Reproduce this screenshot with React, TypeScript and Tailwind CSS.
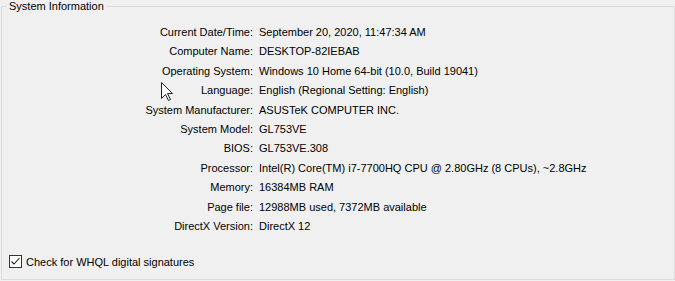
const rows: [string, string][] = [
  ["Current Date/Time:", "September 20, 2020, 11:47:34 AM"],
  ["Computer Name:", "DESKTOP-82IEBAB"],
  ["Operating System:", "Windows 10 Home 64-bit (10.0, Build 19041)"],
  ["Language:", "English (Regional Setting: English)"],
  ["System Manufacturer:", "ASUSTeK COMPUTER INC."],
  ["System Model:", "GL753VE"],
  ["BIOS:", "GL753VE.308"],
  ["Processor:", "Intel(R) Core(TM) i7-7700HQ CPU @ 2.80GHz (8 CPUs), ~2.8GHz"],
  ["Memory:", "16384MB RAM"],
  ["Page file:", "12988MB used, 7372MB available"],
  ["DirectX Version:", "DirectX 12"],
];

function Cursor() {
  return (
    <svg
      className="absolute left-[161px] top-[82px] pointer-events-none"
      width="13"
      height="20"
      viewBox="0 0 13 20"
    >
      <path
        d="M0.5 0.5 L0.5 16.5 L4.5 12.5 L7.5 18.5 L9.5 17.5 L6.5 11.5 L11.5 11.5 Z"
        fill="#fff"
        stroke="#222"
        strokeWidth="1"
        strokeLinejoin="miter"
      />
    </svg>
  );
}

export default function App() {
  return (
    <div
      className="relative w-[675px] h-[281px] bg-[#f0f0f0] text-black text-[11px] overflow-hidden"
      style={{ fontFamily: '"Liberation Sans", Arial, sans-serif' }}
    >
      <fieldset className="ml-[1px] w-[674px] h-[280px] border border-[#dcdcdc] flex flex-col">
        <legend className="ml-[5px] px-[2px] leading-[13px]">System Information</legend>
        <div className="grid grid-cols-[251px_1fr] gap-x-[6px] pt-[10px]">
          {rows.map(([label, value]) => (
            <div key={label} className="contents">
              <div className="text-right h-[19.4px] leading-[19.4px]">{label}</div>
              <div className="h-[19.4px] leading-[19.4px] whitespace-nowrap">{value}</div>
            </div>
          ))}
        </div>
        <label className="mt-auto mb-[9px] ml-[7px] flex items-center gap-[4px]">
          <span className="w-[13px] h-[13px] border border-[#333] bg-white grid place-items-center">
            <svg width="11" height="11" viewBox="0 0 11 11">
              <path d="M1.5 5.5 L4 8 L9.5 2" fill="none" stroke="#222" strokeWidth="1.1" />
            </svg>
          </span>
          <span>Check for WHQL digital signatures</span>
        </label>
      </fieldset>
      <Cursor />
    </div>
  );
}
